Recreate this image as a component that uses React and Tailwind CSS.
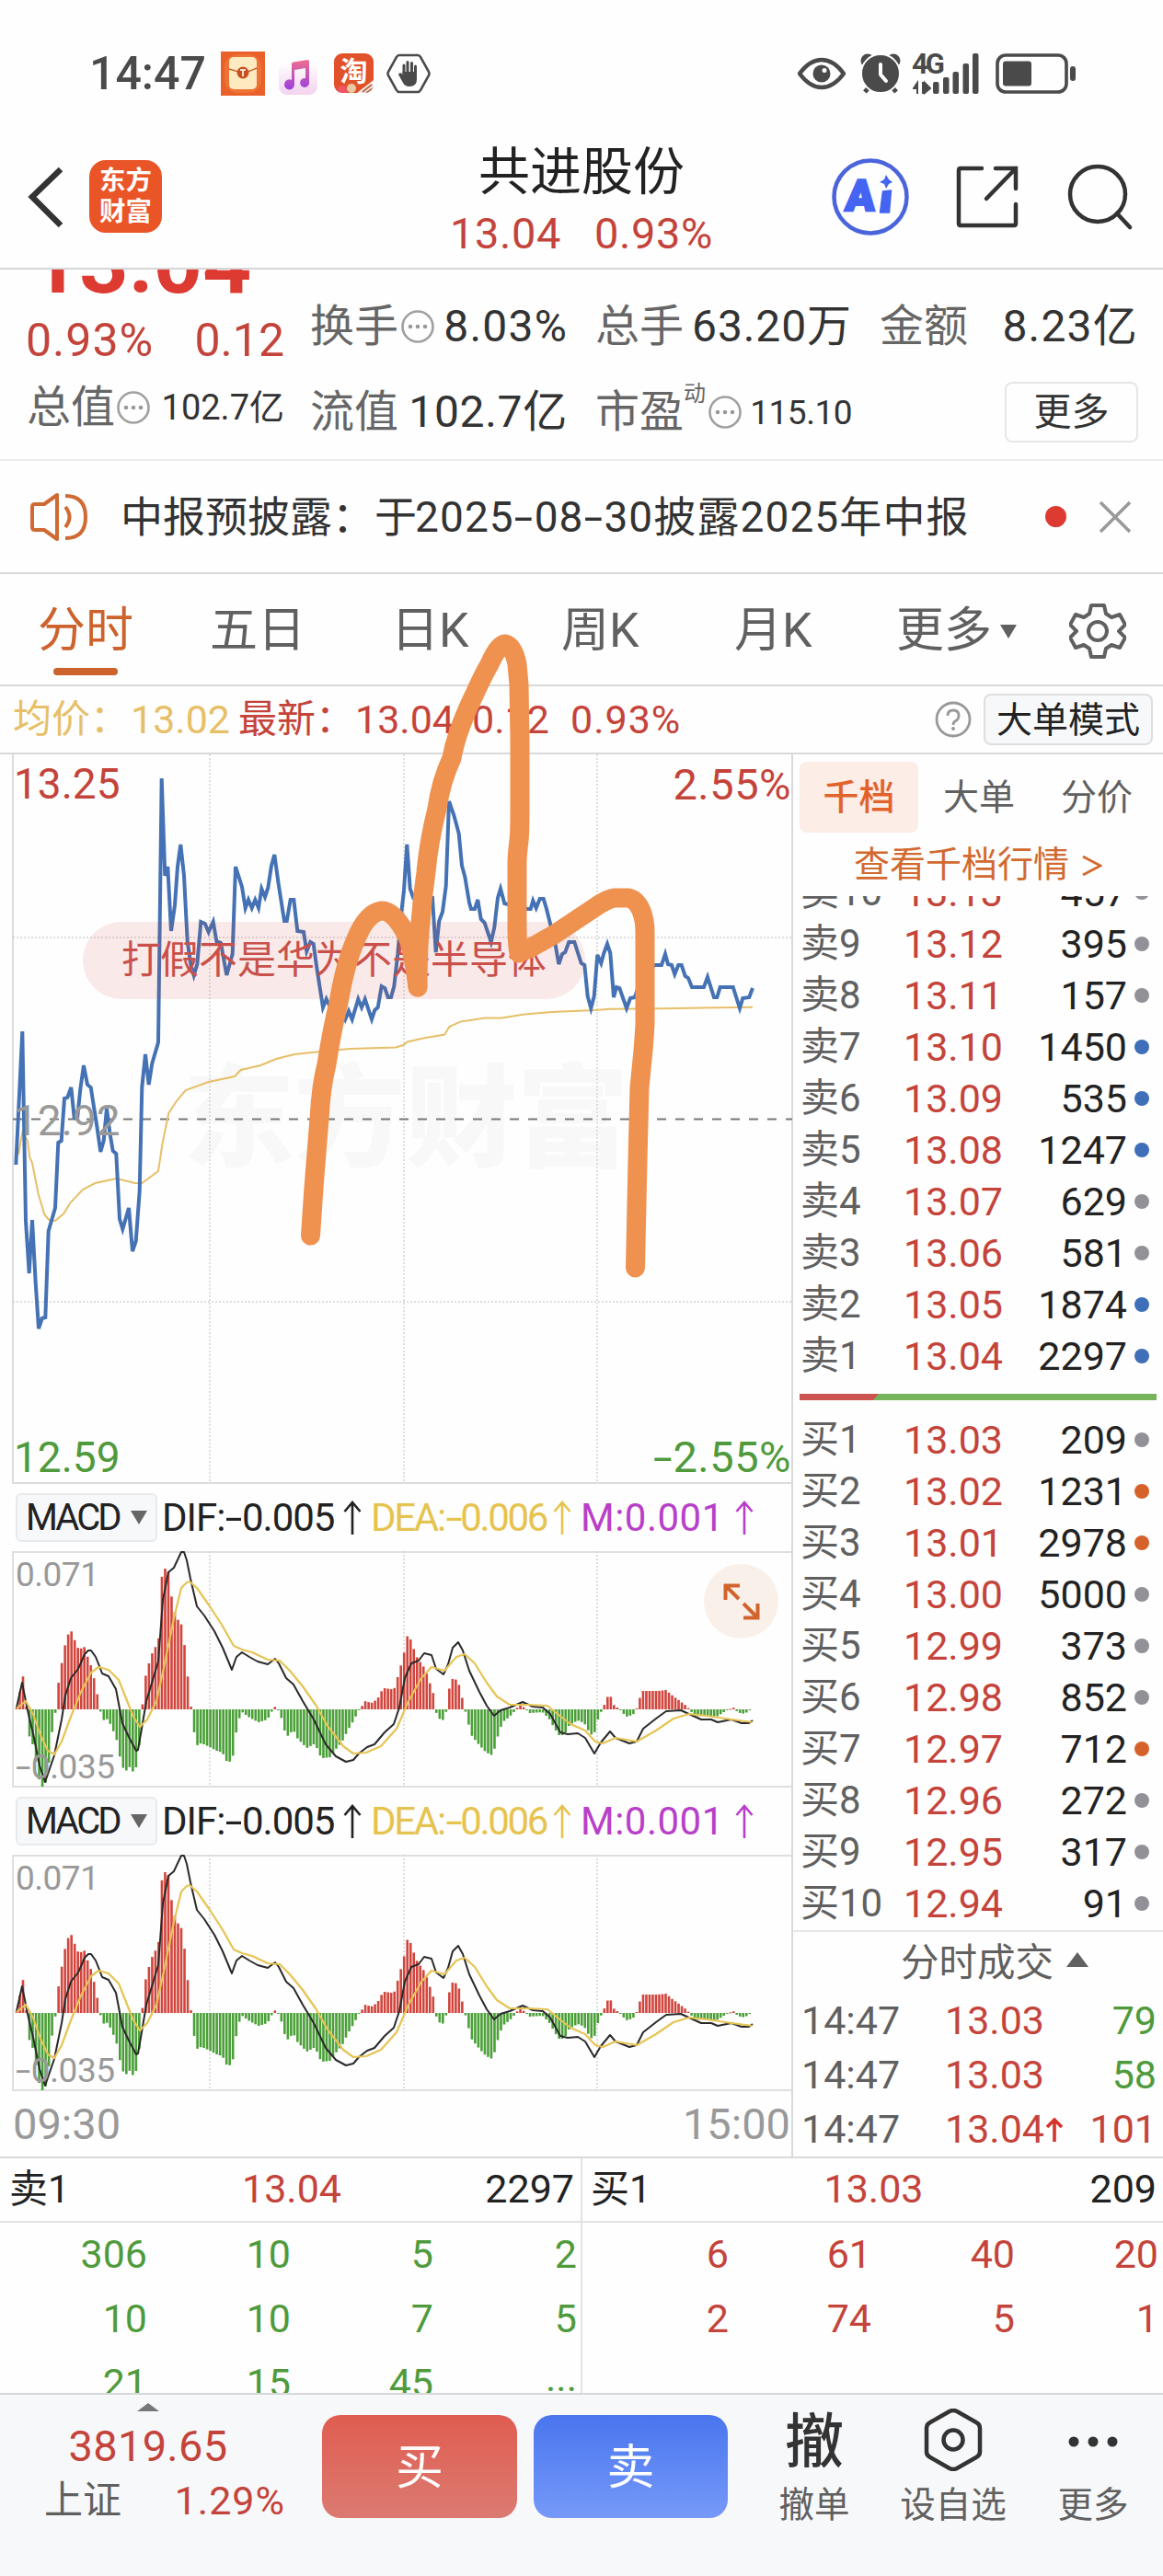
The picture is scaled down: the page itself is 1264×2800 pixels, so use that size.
import { useMemo } from 'react';

const asks = [
  { name: '卖10', price: '13.13', volume: '457', dot: 'bg-[#929197]' },
  { name: '卖9', price: '13.12', volume: '395', dot: 'bg-[#929197]' },
  { name: '卖8', price: '13.11', volume: '157', dot: 'bg-[#929197]' },
  { name: '卖7', price: '13.10', volume: '1450', dot: 'bg-[#3f6fb8]' },
  { name: '卖6', price: '13.09', volume: '535', dot: 'bg-[#3f6fb8]' },
  { name: '卖5', price: '13.08', volume: '1247', dot: 'bg-[#3f6fb8]' },
  { name: '卖4', price: '13.07', volume: '629', dot: 'bg-[#929197]' },
  { name: '卖3', price: '13.06', volume: '581', dot: 'bg-[#929197]' },
  { name: '卖2', price: '13.05', volume: '1874', dot: 'bg-[#3f6fb8]' },
  { name: '卖1', price: '13.04', volume: '2297', dot: 'bg-[#3f6fb8]' },
];

const bids = [
  { name: '买1', price: '13.03', volume: '209', dot: 'bg-[#929197]' },
  { name: '买2', price: '13.02', volume: '1231', dot: 'bg-[#d6622b]' },
  { name: '买3', price: '13.01', volume: '2978', dot: 'bg-[#d6622b]' },
  { name: '买4', price: '13.00', volume: '5000', dot: 'bg-[#929197]' },
  { name: '买5', price: '12.99', volume: '373', dot: 'bg-[#929197]' },
  { name: '买6', price: '12.98', volume: '852', dot: 'bg-[#929197]' },
  { name: '买7', price: '12.97', volume: '712', dot: 'bg-[#d6622b]' },
  { name: '买8', price: '12.96', volume: '272', dot: 'bg-[#929197]' },
  { name: '买9', price: '12.95', volume: '317', dot: 'bg-[#929197]' },
  { name: '买10', price: '12.94', volume: '91', dot: 'bg-[#929197]' },
];

const trades = [
  { time: '14:47', price: '13.03', volume: '79', color: 'text-[#4f9a3c]' },
  { time: '14:47', price: '13.03', volume: '58', color: 'text-[#4f9a3c]' },
  { time: '14:47', price: '13.04', volume: '101', color: 'text-[#c4433a]', up: true },
];

const askQueue = ['306', '10', '5', '2', '10', '10', '7', '5', '21', '15', '45', '...'];
const bidQueue = ['6', '61', '40', '20', '2', '74', '5', '1'];

const priceLine =
  '17.3,446 24.3,301 28,507 31.7,564 35,506 38.7,574 42,624 45.7,613 49.3,612 52.7,518 60,493 63.3,422 66.7,420 70,374 73.3,373 77.3,362 80.7,395 84,396 87.3,364 91,338 95,359 98.7,362 105.3,404 109.3,432 112.7,420 116,385 119.3,411 122.7,431 126.3,434 130,505 133.3,516 140,493 144,540 147.7,529 151.7,475 154.3,362 158,326 161.7,359 165.3,336 172,313 175.7,26 179.3,132 182.3,122 186,192 190,164 193,122 196.3,98 200,132 203.7,203 207.3,228 210.7,240 214.3,228 218.3,182 222.7,184 226.7,193 231.7,182 235.3,203 240,205 246.3,240 252.7,217 256,122 263,144 266.7,167 270,158 273.7,167 277.3,158 281,167 284.3,146 288,155 291.3,145 295,121 298.3,109 302.7,141 309,181 311.7,181 315.7,158 319.3,158 323.3,192 330,193 333.3,214 337.3,204 340.7,206 344,230 351,275 354.7,266 360,277 371,277 375.3,288 379,279 382.7,288 389.3,266 393,275 396.7,266 404,288 407.3,278 410.7,275 414.7,252 418.3,254 421.7,264 425,264 428.3,252 432.3,217 436.7,168 439,148 442.3,98 445.7,146 449.3,156 470,156 473.7,215 477.3,181 481,171 484.7,143 488,51 493.3,66 498.7,86 502,121 505.3,133 510,161 512,168 516,168 519.3,158 522.7,179 526.7,183 533.7,204 537.3,188 541,156 544,146 548.3,162 573.3,168 576.7,168 579.3,159 582.7,167 586.7,157 590.7,157 594,168 603.3,205 607.3,228 611,217 614.3,215 618.3,204 624.3,204 631.7,227 635.3,229 638.7,263 642.3,276 645.7,263 649.3,218 653.3,227 656.3,216 660,206 663.3,216 667,264 670,253 673.3,254 681,276 685,265 690,264 698,240 711.7,229 719,229 723,217 726,228 730,229 733.3,239 737.3,229 740.7,229 744.7,241 748,243 752,253 765,253 769,242 776,264 779.3,264 782.7,253 796.7,253 804,276 807.3,265 814.3,264 818,254';

const averageLine =
  '20,435 24.3,411 30,420 32.3,438 35,444 41.7,478 48.3,500 53.3,506 60,507 69.3,499 76.7,487 90,473 103.3,466 126.7,461 146.7,466 154.3,466 172,453 176.7,422 183.3,390 191.7,377 201.7,365 226.7,356 255,350 261.7,343 283.3,338 300,331 320,326 348.3,323 380,320 430,318.5 438.3,316 442.7,312.5 460,308.5 483.3,304.5 488.3,296 500,290.6 526.7,286.6 545,286.6 570,282.6 600,280 646.7,278 663.3,276.7 720,276.2 818,274.7';

const difLine =
  '18,170 24,143 30,173 37,203 43,233 49,251 59,222 67,183 71,157 77,138 85,128 92,112 96,108 99,108 104,115 108,125 111,133 118,136 126,150 133,187 140,202 148,217 150,216 154,193 159,163 166,140 172,120 177,53 183,23 189,18 197,1 200,1 203,10 207,30 214,60 222,70 233,87 242,105 252,129 257,115 263,110 271,115 280,120 291,123 299,117 303,122 311,138 319,145 329,163 341,183 354,210 365,223 376,229 384,227 390,220 399,213 407,210 418,197 428,188 434,170 440,138 447,122 455,119 461,111 469,113 474,128 482,134 487,123 492,105 498,99 503,108 510,130 521,153 529,168 537,179 544,173 554,170 568,164 579,169 590,170 598,177 609,197 617,199 628,198 636,203 646,220 653,208 663,196 669,203 684,209 692,207 699,193 713,182 724,174 740,173 751,178 762,183 773,183 780,186 795,183 806,187 814,187 818,184';

const deaLine =
  '18,171 28,163 36,177 44,200 52,217 59,221 67,207 77,180 88,153 99,132 107,126 118,129 129,140 137,160 145,180 152,191 160,183 170,163 178,127 189,73 197,40 203,34 206,33 214,40 228,60 241,80 254,103 263,107 274,110 291,118 304,119 315,130 329,147 343,167 356,190 373,212 384,220 398,219 414,212 431,193 444,163 458,138 469,126 483,130 496,115 505,112 516,122 529,143 540,158 554,167 573,167 595,168 606,177 620,188 636,195 647,207 655,209 669,203 692,207 713,195 732,182 749,177 768,179 795,183 818,186';

// outline of the MACD histogram: [x, height]
const histogram = [
  [18, 2], [20.8, 12], [24.1, 44], [28, 9], [31.3, -28], [35, -35], [38.4, -53], [42.2, -75], [45.5, -84], [48.8, -84],
  [52.7, -62], [56, -28], [59.8, -7], [63, 25], [66.4, 46], [70.2, 68], [73.5, 80], [76.8, 87], [80.6, 77], [83.9, 67],
  [87.8, 66], [91.6, 68], [94.9, 58], [98.2, 50], [102, 35], [105.3, 19], [108.6, 0], [111.9, -12], [115.7, -10], [119, -14],
  [122.9, -23], [126, -29], [130, -50], [133.3, -63], [137, -67], [140.4, -62], [143.7, -68], [147.5, -65], [150.8, -47],
  [154, -3], [158, 35], [161, 47], [165, 60], [168.4, 67], [172.2, 72], [175.5, 143], [179.3, 153], [182.6, 153], [186, 125],
  [189.8, 106], [193, 98], [196.9, 93], [200.2, 73], [204, 36], [207.3, 5], [210.6, -23], [214.4, -39], [217.7, -37],
  [221.6, -38], [228.2, -41], [235.3, -45], [241.9, -47], [245.7, -56], [249.5, -57], [252.8, -53], [256.7, -25], [260, -10],
  [263.3, -3], [269.8, -8], [277, -12], [281.4, -14], [290.7, -11], [295, -3], [298.4, 3], [302.2, 0], [305.5, -8],
  [308.8, -22], [312.6, -29], [315.9, -25], [319.7, -24], [323.6, -32], [333.5, -42], [341, -38], [344.4, -42], [347.7, -50],
  [351.6, -53], [358.7, -52], [365.3, -43], [371.9, -35], [378.4, -22], [385.6, -10], [389.4, -1], [393.2, 3], [396.5, 9],
  [403.7, 7], [410.2, 11], [414, 19], [417.9, 23], [425, 22], [428.3, 22], [431.6, 33], [435.5, 47], [438.8, 59], [442, 80],
  [445.9, 77], [449.2, 67], [453, 57], [456.3, 52], [459.6, 48], [463.4, 40], [466.7, 30], [470.6, 19], [473.9, -3],
  [477.2, -10], [481, -12], [484.3, -7], [487.6, 20], [491.4, 33], [494.7, 33], [498, 30], [501.8, 15], [505, 1], [509, -15],
  [512.3, -28], [519.4, -37], [526.5, -45], [533.6, -50], [536.9, -45], [540.2, -32], [544, -20], [547.4, -13], [553.9, -8],
  [559.4, -2], [564.4, 5], [571.5, 1], [575.9, -4], [589.6, -3], [596.7, -10], [600.6, -17], [607.1, -28], [613.2, -28],
  [618.7, -17], [628, -12], [635, -15], [641.7, -27], [645.5, -28], [649.4, -12], [652.7, -4], [656.5, 4], [659.8, 13],
  [663, 16], [666.9, 5], [673.5, 0], [680.6, -8], [687.8, -6], [691.6, 0], [694.9, 11], [698.2, 20], [707.5, 20], [715.7, 20],
  [724, 21], [729.5, 16], [737.7, 10], [747, 3], [750.3, -2], [759.6, -8], [765, -6], [778.8, -8], [789.8, -1], [797, 2],
  [800.8, -2], [806.2, -5], [812.8, -3], [817.8, 2],
];

const BAR_STEP = 3.51;

const StatusBar = () => (
  <div className="flex h-[133px] items-center pt-[26px] pl-[97px] text-[#4a4a4a]">
    <span className="w-[143px] text-[50px] font-medium leading-none">14:47</span>
    <svg width="48" height="48" viewBox="0 0 48 48">
      <rect width="48" height="48" fill="#e9602a" />
      <rect x="4" y="3" width="40" height="42" rx="14" fill="#ee7234" />
      <rect x="9" y="6" width="30" height="35" rx="5" fill="#fdeac0" />
      <path d="M9 19c8 2 11 4 15 4s8-2 15-5" fill="none" stroke="#c9602c" strokeWidth="1.5" />
      <circle cx="24" cy="23" r="6.5" fill="#c8511f" />
      <path d="M21 20h6M24 20v7" stroke="#fff" strokeWidth="1.6" />
    </svg>
    <svg className="ml-[14px] mt-2" width="44" height="38" viewBox="0 0 44 38">
      <defs>
        <linearGradient id="note" x1="0" y1="0" x2="0" y2="1">
          <stop offset="0" stopColor="#ee6f8f" />
          <stop offset="1" stopColor="#9c3fe0" />
        </linearGradient>
        <linearGradient id="noteBg" x1="0" y1="0" x2="0" y2="1">
          <stop offset="0" stopColor="#ffffff" />
          <stop offset="1" stopColor="#f3d3ee" />
        </linearGradient>
      </defs>
      <rect x="1" y="2" width="42" height="36" rx="9" fill="url(#noteBg)" />
      <path d="M15 4Q15 3 17 2.500L32 0q2 0 2 2v22a5 5 0 1 1-4-4V9l-12 2v16a5.500 5.500 0 1 1-3-5z" fill="url(#note)" />
    </svg>
    <div className="relative ml-[17px] flex h-[43px] w-[43px] items-start justify-center overflow-hidden rounded-[9px] bg-[#e2522a]">
      <span className="mt-[5px] text-[30px] font-bold leading-none text-white">淘</span>
      <svg className="absolute bottom-0 left-0" width="43" height="14" viewBox="0 0 43 14">
        <circle cx="9" cy="11" r="5" fill="#ef5468" />
        <circle cx="19" cy="9" r="5" fill="#e8c9a4" />
        <path d="M25 14 43 0v14z" fill="#f7efe9" />
        <path d="m31 13 10-8M35 14l7-5" stroke="#b86a50" strokeWidth="2" />
      </svg>
    </div>
    <svg className="ml-[14px]" width="48" height="44" viewBox="0 0 48 44">
      <path d="M14 2h20q2 0 3 2l9 16q1 2 0 4l-9 16q-1 2-3 2H14q-2 0-3-2L2 24q-1-2 0-4l9-16q1-2 3-2z" fill="none" stroke="#4a4a4a" strokeWidth="2.600" />
      <path d="M19 24V13M23 22V9.500M27.500 22V10.500M31.500 24V14" stroke="#4a4a4a" strokeWidth="3" strokeLinecap="round" />
      <path d="M17.500 20h15.500v8q0 8-8 8-5 0-7-4l-5-9q1-3 4-1l1 2z" fill="#4a4a4a" />
    </svg>
    <svg className="ml-[398px]" width="54" height="36" viewBox="0 0 54 36">
      <path d="M3 18Q14 3 27 3t24 15Q40 33 27 33T3 18z" fill="none" stroke="#4a4a4a" strokeWidth="4.500" strokeLinejoin="round" />
      <circle cx="27" cy="18" r="9.500" fill="#4a4a4a" />
      <circle cx="30" cy="14.500" r="2.500" fill="#fff" />
    </svg>
    <svg className="ml-[15px]" width="44" height="44" viewBox="0 0 44 44">
      <circle cx="8" cy="8" r="7.500" fill="#4a4a4a" />
      <circle cx="36" cy="8" r="7.500" fill="#4a4a4a" />
      <path d="m10 36-5 6M34 36l5 6" stroke="#4a4a4a" strokeWidth="5" />
      <circle cx="22" cy="22" r="21" fill="#4a4a4a" stroke="#fff" strokeWidth="2" />
      <path d="M22 12v11l6 7" fill="none" stroke="#fff" strokeWidth="4" strokeLinecap="round" />
    </svg>
    <div className="relative ml-[13px] h-[46px] w-[74px]">
      <span className="absolute -left-px top-px text-[31px] font-bold leading-[23px] tracking-[-3px]">4G</span>
      <svg className="absolute inset-0" width="74" height="46" viewBox="0 0 74 46">
        <path d="M5 45V33l-4 6h4M11 32v13M13 33l6 6-6 5z" fill="#4a4a4a" stroke="#4a4a4a" strokeWidth="2" />
        <rect x="22" y="32" width="6.500" height="13" rx="2" fill="#4a4a4a" />
        <rect x="33" y="27" width="6.500" height="18" rx="2" fill="#4a4a4a" />
        <rect x="43.500" y="21" width="6.500" height="24" rx="2" fill="#4a4a4a" />
        <rect x="54.500" y="12" width="6.500" height="33" rx="2" fill="#4a4a4a" />
        <rect x="65" y="1" width="6.500" height="44" rx="2" fill="#4a4a4a" />
      </svg>
    </div>
    <svg className="ml-[16px]" width="88" height="44" viewBox="0 0 88 44">
      <rect x="2" y="2" width="75" height="40" rx="9" fill="none" stroke="#4a4a4a" strokeWidth="3.600" />
      <rect x="8" y="8.500" width="31" height="27" rx="3" fill="#4a4a4a" />
      <rect x="81" y="14" width="6" height="16" rx="3" fill="#4a4a4a" />
    </svg>
  </div>
);

const Header = () => (
  <div className="grid h-[160px] grid-cols-[1fr_auto_1fr] items-center border-b-2 border-[#d6d6d6]">
    <div className="flex items-center pl-7 pt-[3px]">
      <svg width="44" height="70" viewBox="0 0 44 70">
        <path d="M38 5 7 35l31 31" fill="none" stroke="#333" strokeWidth="6.500" />
      </svg>
      <div className="ml-[25px] flex h-[79px] w-[79px] flex-col items-center justify-center rounded-[18px] bg-[#ea5528] text-[28.500px] font-bold leading-[34px] text-white">
        <span>东方</span>
        <span>财富</span>
      </div>
    </div>
    <div className="flex flex-col items-center pt-[16px]">
      <span className="text-[56px] leading-[67px] text-[#222]">共进股份</span>
      <span className="flex gap-[36px] text-[47px] leading-[65px] tracking-[0.600px] text-[#c4433a]">
        <span>13.04</span>
        <span>0.93%</span>
      </span>
    </div>
    <div className="flex items-center justify-end pr-[32px] pt-[3px]">
      <svg width="84" height="84" viewBox="0 0 84 84">
        <circle cx="42" cy="42" r="39.500" fill="none" stroke="#4a64dc" strokeWidth="4.500" />
        <text x="14" y="57" fill="#4465f2" stroke="#4465f2" strokeWidth="2.500" fontFamily="Roboto" fontSize="47" fontWeight="900" transform="skewX(-4) translate(4 0)">A</text>
        <path d="m55.500 36 9-1-2 24h-10z" fill="#4465f2" stroke="#4465f2" strokeWidth="1.500" strokeLinejoin="round" />
        <path d="m59 18 3 5 4 3-4 2-3 5-2-5-5-2 5-3z" fill="#4465f2" />
      </svg>
      <svg className="ml-[50px]" width="72" height="72" viewBox="0 0 72 72">
        <path d="M29 5H6q-2 0-2 2v58q0 2 2 2h58q2 0 2-2V44" fill="none" stroke="#333" strokeWidth="4.500" strokeLinecap="round" />
        <path d="M44 5h22v22M66 5 34 38" fill="none" stroke="#333" strokeWidth="4.500" strokeLinecap="round" />
      </svg>
      <svg className="ml-[50px]" width="72" height="72" viewBox="0 0 72 72">
        <circle cx="33" cy="33" r="30" fill="none" stroke="#333" strokeWidth="4.500" />
        <path d="m54 54 14 15" stroke="#333" strokeWidth="4.500" strokeLinecap="round" />
      </svg>
    </div>
  </div>
);

const MoreDots = () => (
  <svg className="shrink-0" width="36" height="36" viewBox="0 0 36 36">
    <circle cx="18" cy="18" r="16.500" fill="none" stroke="#a0a0a0" strokeWidth="2.600" />
    <circle cx="10" cy="18" r="2.300" fill="#999" />
    <circle cx="18" cy="18" r="2.300" fill="#999" />
    <circle cx="26" cy="18" r="2.300" fill="#999" />
  </svg>
);

// minus sign as wide as the one of the DIN digits
const Dash = () => <span className="mx-[4px] inline-block scale-x-160">-</span>;

const Quote = () => (
  <div className="flex h-[208px] border-b-2 border-[#ededed] pl-[29px] text-[48px] leading-none text-[#333]">
    <div className="w-[280px]">
      <div className="h-[30px] overflow-hidden">
        <div className="-mt-[36px] pl-[4px] text-[93px] font-bold leading-[60px] text-[#dd3a32]">13.04</div>
      </div>
      <div className="flex h-[93px] items-center justify-between text-[50px] text-[#c4433a]">
        <span className="-ml-px tracking-[1px]">0.93%</span>
        <span>0.12</span>
      </div>
      <div className="flex h-[54px] items-center justify-between">
        <span className="flex items-center gap-[2px] text-[#666]">总值<MoreDots /></span>
        <span className="text-[38px]">102.7亿</span>
      </div>
    </div>
    <div className="ml-[28px] w-[900px] pt-[2px]">
      <div className="grid h-[120px] grid-cols-[280px_279px_1fr] items-center gap-x-[30px]">
        <div className="flex items-center justify-between">
          <span className="flex items-center gap-[3px] text-[#666]">换手<MoreDots /></span>
          <span className="tracking-[1.200px]">8.03%</span>
        </div>
        <div className="flex items-center justify-between">
          <span className="text-[#666]">总手</span>
          <span className="tracking-[0.900px]">63.20万</span>
        </div>
        <div className="flex items-center justify-between">
          <span className="text-[#666]">金额</span>
          <span className="tracking-[1.200px]">8.23亿</span>
        </div>
      </div>
      <div className="grid h-[52px] grid-cols-[280px_279px_1fr] items-center gap-x-[30px]">
        <div className="flex items-center justify-between">
          <span className="text-[#666]">流值</span>
          <span className="tracking-[0.700px]">102.7亿</span>
        </div>
        <div className="flex items-center justify-between">
          <span className="flex items-center text-[#666]">
            市盈<span className="-mt-10 mr-[3px] text-[24px]">动</span><MoreDots />
          </span>
          <span className="text-[37px] tracking-[-0.500px]">115.10</span>
        </div>
        <div className="flex justify-end">
          <button className="h-[66px] w-[145px] rounded-lg border-2 border-[#e6e6e6] text-[41px]">更多</button>
        </div>
      </div>
    </div>
  </div>
);

const Notice = () => (
  <div className="flex h-[123px] items-center border-b-2 border-[#d9d9d9] pl-[33px]">
    <svg width="64" height="54" viewBox="0 0 64 54">
      <path d="M29 3v48L15 41H5q-3 0-3-3V16q0-3 3-3h10z" fill="none" stroke="#cf6a33" strokeWidth="4" strokeLinejoin="round" />
      <path d="M38 16q9 11 0 22M38 4q22 0 22 23T38 50" fill="none" stroke="#cf6a33" strokeWidth="4" />
    </svg>
    <span className="ml-[34px] w-[1005px] whitespace-nowrap text-[46px] leading-none text-[#333]">
      中报预披露：于
      <span className="-ml-[2px] tracking-[1.100px]">
        2025<Dash />08<Dash />30披露2025年中报
      </span>
    </span>
    <span className="h-[23px] w-[23px] rounded-full bg-[#dd3a32]" />
    <svg className="ml-[35px]" width="36" height="36" viewBox="0 0 36 36">
      <path d="m2 2 32 32M34 2 2 34" stroke="#999" strokeWidth="3.500" />
    </svg>
  </div>
);

const Tabs = () => (
  <div className="flex h-[122px] items-center border-b-2 border-[#d9d9d9] pl-[41px] pt-[4px] text-[52px] leading-none text-[#606060]">
    <span className="relative w-[187px] text-[#cd622c]">
      分时
      <i className="absolute -bottom-[22px] left-[17px] h-[8px] w-[70px] rounded-full bg-[#cd622c]" />
    </span>
    <span className="w-[197px]">五日</span>
    <span className="w-[185px]">日K</span>
    <span className="w-[188px]">周K</span>
    <span className="w-[176px]">月K</span>
    <span>更多</span>
    <svg className="ml-[9px]" width="18" height="15" viewBox="0 0 18 15">
      <path d="M0 0h18L9 15z" fill="#606060" />
    </svg>
    <svg className="ml-[57px]" width="62" height="62" viewBox="0 0 62 62">
      <path
        d="M24 3h14l2 9 6 4 9-3 6 11-7 7 7 7-6 11-9-3-6 4-2 9H24l-2-9-6-4-9 3L1 38l7-7-7-7 6-11 9 3 6-4z"
        fill="none"
        stroke="#606060"
        strokeWidth="4"
        strokeLinejoin="round"
      />
      <circle cx="31" cy="31" r="10" fill="none" stroke="#606060" strokeWidth="4" />
    </svg>
  </div>
);

const PriceInfo = () => (
  <div className="flex h-[74px] items-center border-b-2 border-[#d9d9d9] pl-[14px] text-[42px] leading-none text-[#c4433a]">
    <span className="w-[128px] text-[#e6bf68]">均价：</span>
    <span className="w-[117px] text-[43px] text-[#e6bf68]">13.02</span>
    <span className="w-[127px]">最新：</span>
    <span className="w-[127px] text-[43px]">13.04</span>
    <span className="w-[107px] text-[43px]">0.12</span>
    <span className="w-[396px] text-[43px] tracking-[1px]">0.93%</span>
    <svg width="40" height="40" viewBox="0 0 40 40">
      <circle cx="20" cy="20" r="18" fill="none" stroke="#999" strokeWidth="2.800" />
      <path d="M14 16q0-6 6-6t6 6q0 4-4 6-2 1-2 4" fill="none" stroke="#999" strokeWidth="2.800" />
      <circle cx="20" cy="30" r="2" fill="#999" />
    </svg>
    <button className="ml-[13px] h-[56px] w-[184px] rounded-lg border-2 border-[#dcdee0] bg-[#f7f8fa] pt-[2px] text-[39px] text-[#222]">
      大单模式
    </button>
  </div>
);

const Grid = ({ height }) => (
  <g stroke="#d4d4d4" strokeWidth="1.500" strokeDasharray="2 2">
    <path d={`M228 0V${height}`} />
    <path d={`M439 0V${height}`} />
    <path d={`M649 0V${height}`} />
  </g>
);

const PriceChart = () => (
  <div className="relative ml-[13px] h-[793px] border-b-2 border-l-2 border-[#dcdcdc] text-[46px] leading-none">
    <span className="absolute left-[184px] top-[337px] text-[121px] font-black text-[#f8f8f8]">东方财富</span>
    <svg className="absolute -left-[15px] top-0" width="861" height="791" viewBox="0 0 861 791">
      <Grid height={791} />
      <g stroke="#d4d4d4" strokeWidth="1.500" strokeDasharray="2 2">
        <path d="M14 199H861" />
        <path d="M14 595H861" />
      </g>
      <path d="M14 396.500H861" stroke="#777" strokeWidth="2" strokeDasharray="10 10" />
      <polyline points={averageLine} fill="none" stroke="#e6bf68" strokeWidth="2" />
      <polyline points={priceLine} fill="none" stroke="#4472b4" strokeWidth="4" />
    </svg>
    <span className="absolute left-0 top-[9px] text-[#c4433a]">13.25</span>
    <span className="absolute right-0 top-[9px] text-[47px] tracking-[0.500px] text-[#c4433a]">2.55%</span>
    <span className="absolute left-0 top-[375px] text-[#999]">12.92</span>
    <span className="absolute bottom-[4px] left-0 text-[#4f9a3c]">12.59</span>
    <span className="absolute bottom-[4px] right-0 text-[47px] tracking-[0.500px] text-[#4f9a3c]"><Dash />2.55%</span>
    <span className="absolute left-[75px] top-[182px] flex h-[84px] w-[546px] items-center whitespace-nowrap rounded-full bg-[#d03c32]/10 pl-[42px] text-[42px] text-[#c9504b]">
      打假不是华为不是半导体
    </span>
    {/* hand drawn mark */}
    <svg className="pointer-events-none absolute -left-[15px] top-0 z-10 overflow-visible" width="861" height="791" viewBox="0 0 861 791">
      <g fill="none" stroke="#ef914f" strokeWidth="21" strokeLinecap="round" strokeLinejoin="round">
        <path d="M337.500 523 341 471 347 396Q349 360 355 337 361 298 368 270 375 228 386 203 398 172 415 170 430 170 445 203 450 222 454 253" />
        <path d="M454 253Q454 210 457 183 459 155 463 128 466 95 475 59 479 30 491 4 496-25 516-66 525-86 532-98 542-120 549-120 558-118 562-98L564-76 565-16 565 60Q565 85 564 94 562 110 562 118V188Q562 205 564 216 570 213 577 210L602 196 647 166Q660 157 668 156H683Q692 158 697 170 701 180 701 193L701 293Q700 310 699 322L695 362 693 442 690.500 558" />
      </g>
    </svg>
  </div>
);

const IndicatorBar = () => (
  <div className="flex h-[73px] items-center pl-[17px] text-[42px] leading-none">
    <button className="flex h-[53px] w-[154px] items-center justify-between rounded-md border-2 border-[#e8eaec] bg-[#f7f8fa] pl-[9px] pr-[9px] text-[40px] tracking-[-3px] text-[#222]">
      MACD
      <svg width="18" height="15" viewBox="0 0 18 15">
        <path d="M0 0h18L9 15z" fill="#666" />
      </svg>
    </button>
    <span className="ml-[5px] flex w-[227px] items-center text-[#222]">
      <span className="w-[197px] tracking-[-1px]">DIF:<Dash />0.005</span>
      <UpArrow />
    </span>
    <span className="flex w-[228px] items-center text-[#e6c34f]">
      <span className="w-[198px] tracking-[-2.300px]">DEA:<Dash />0.006</span>
      <UpArrow />
    </span>
    <span className="flex items-center text-[#b83fc8]">
      <span className="w-[168px] tracking-[0.500px]">M:0.001</span>
      <UpArrow />
    </span>
  </div>
);

const UpArrow = () => (
  <svg width="20" height="38" viewBox="0 0 20 38">
    <path d="M10 37V2M1.500 12 10 2l8.500 10" fill="none" stroke="currentColor" strokeWidth="2.600" />
  </svg>
);

const MacdChart = ({ expandable }) => {
  const bars = useMemo(() => {
    const result = [];
    for (let x = 18; x <= 818; x += BAR_STEP) {
      const next = histogram.findIndex((point) => point[0] >= x);
      if (next < 1) {
        result.push({ x, height: histogram[0][1] });
        continue;
      }
      const [x0, h0] = histogram[next - 1];
      const [x1, h1] = histogram[next];
      result.push({ x, height: h0 + ((h1 - h0) * (x - x0)) / (x1 - x0) });
    }
    return result;
  }, []);

  return (
    <div className="relative ml-[13px] h-[257px] border-2 border-r-0 border-[#dfdfdf] text-[37px] leading-none text-[#999]">
      <svg className="absolute -left-[15px] -top-[2px]" width="861" height="257" viewBox="0 0 861 257">
        <Grid height={256} />
        {bars.map((bar) => (
          <rect
            key={bar.x}
            x={bar.x - 1.3}
            y={bar.height > 0 ? 172 - bar.height : 172}
            width="2.600"
            height={Math.max(Math.abs(bar.height), 1)}
            fill={bar.height > 0 ? '#d1453d' : '#4b9f38'}
          />
        ))}
        <polyline points={difLine} fill="none" stroke="#2a2a2a" strokeWidth="2" strokeLinejoin="round" />
        <polyline points={deaLine} fill="none" stroke="#e6c454" strokeWidth="2.200" strokeLinejoin="round" />
      </svg>
      <span className="absolute left-[2px] top-[5px] tracking-[-0.500px]">0.071</span>
      <span className="absolute bottom-[2px] left-[1px] tracking-[-0.400px]"><Dash />0.035</span>
      {expandable && (
        <span className="absolute right-[14px] top-[12px] flex h-[81px] w-[81px] items-center justify-center rounded-full bg-[#faf0ea]">
          <svg width="42" height="42" viewBox="0 0 42 42">
            <path d="M19 3.500H3.500V19M4 4l14 14M23 38.500h15.500V23M38 38 23 23" fill="none" stroke="#d2632c" strokeWidth="4" />
          </svg>
        </span>
      )}
    </div>
  );
};

const LevelRow = ({ level }) => (
  <div className="flex h-14 shrink-0 items-center pl-[8px] text-[43px] leading-none">
    <span className="w-[112px] whitespace-nowrap text-[42px] text-[#606060]">{level.name}</span>
    <span className="w-[110px] text-[#c4433a]">{level.price}</span>
    <span className="w-[133px] text-right text-[#222]">{level.volume}</span>
    <span className={`ml-[8px] h-4 w-4 rounded-full ${level.dot}`} />
  </div>
);

const OrderBook = () => (
  <div className="flex w-[404px] flex-col border-l-2 border-[#d9d9d9] leading-none">
    <div className="flex h-[92px] items-center pl-[7px] pt-[2px] text-[39px] text-[#606060]">
      <span className="-mt-[2px] flex h-[77px] w-[129px] items-center justify-center rounded-lg bg-[#fcede6] pt-[2px] font-medium text-[#e2622c]">千档</span>
      <span className="ml-[27px]">大单</span>
      <span className="ml-[50px]">分价</span>
    </div>
    <div className="flex h-[54px] items-center gap-[14px] pl-[66px] pt-[3px] text-[39px] text-[#d2692f]">
      <span>查看千档行情</span>
      <svg width="22" height="22" viewBox="0 0 22 22">
        <path d="m1 1 19 10L1 21" fill="none" stroke="#d2692f" strokeWidth="2.800" />
      </svg>
    </div>
    <div className="mt-2 flex h-[528px] flex-col justify-end overflow-hidden">
      {asks.map((level) => (
        <LevelRow key={level.name} level={level} />
      ))}
    </div>
    <svg className="ml-[7px] mt-[13px] shrink-0" width="388" height="7" viewBox="0 0 388 7">
      <rect width="388" height="7" fill="#76b45c" />
      <path d="M0 0h86l-6 7H0z" fill="#cc5450" />
    </svg>
    <div className="mt-[15px]">
      {bids.map((level) => (
        <LevelRow key={level.name} level={level} />
      ))}
    </div>
    <div className="mt-[1px] flex h-[69px] items-center border-t-2 border-[#e6e6e6] pl-[117px] text-[41.500px] text-[#606060]">
      分时成交
      <svg className="-mt-2 ml-[14px]" width="24" height="16" viewBox="0 0 24 16">
        <path d="M0 16h24L12 0z" fill="#606060" />
      </svg>
    </div>
    {trades.map((trade, index) => (
      <div key={index} className="flex h-[59px] items-center pl-[9px] pr-[7px] text-[43px]">
        <span className="w-[156px] text-[#606060]">{trade.time}</span>
        <span className="w-[109px] text-[#c4433a]">{trade.price}</span>
        {trade.up && (
          <svg width="20" height="27" viewBox="0 0 20 27">
            <path d="M10 27V3M2 11l8-8 8 8" fill="none" stroke="#d3342b" strokeWidth="3.600" />
          </svg>
        )}
        <span className={`ml-auto ${trade.color}`}>{trade.volume}</span>
      </div>
    ))}
  </div>
);

const Depth = () => (
  <div className="flex h-[257px] border-t-2 border-[#d9d9d9] text-[43px] leading-none">
    <div className="w-[633px] border-r-2 border-[#e2e2e2]">
      <div className="grid h-[70px] grid-cols-3 items-center border-b-2 border-[#e2e2e2] pb-[1px] pl-[10px] pr-[7px] text-[#222]">
        <span className="text-[42px]">卖1</span>
        <span className="text-center text-[#c4433a]">13.04</span>
        <span className="text-right">2297</span>
      </div>
      <div className="-mt-[1px] grid h-[186px] grid-cols-[160px_156px_155px_156px] auto-rows-[70px] items-center overflow-hidden text-right text-[#4f9a3c]">
        {askQueue.map((item, index) => (
          <span key={index} className={item === '...' ? '-mt-3' : ''}>{item}</span>
        ))}
      </div>
    </div>
    <div className="flex-1">
      <div className="grid h-[70px] grid-cols-3 items-center border-b-2 border-[#e2e2e2] pb-[1px] pl-[9px] pr-[7px] text-[#222]">
        <span className="text-[42px]">买1</span>
        <span className="text-center text-[#c4433a]">13.03</span>
        <span className="text-right">209</span>
      </div>
      <div className="-mt-[1px] grid h-[186px] grid-cols-[159px_155px_156px_156px] auto-rows-[70px] items-center overflow-hidden text-right text-[#c4433a]">
        {bidQueue.map((item, index) => (
          <span key={index}>{item}</span>
        ))}
      </div>
    </div>
  </div>
);

const BottomBar = () => (
  <div className="flex h-[199px] border-t-2 border-[#d6d7d9] bg-[#f7f8fa] leading-none">
    <div className="flex w-[322px] flex-col items-center pt-[9px]">
      <svg width="24" height="9" viewBox="0 0 24 9">
        <path d="M0 9h24L12 0z" fill="#77777b" />
      </svg>
      <span className="mt-[11px] text-[47px] leading-[54px] tracking-[0.300px] text-[#c4433a]">3819.65</span>
      <span className="flex w-[322px] items-center justify-between pl-[48px] pr-[12px] text-[42px] leading-[64px] text-[#606060]">
        上证
        <span className="text-[43px] tracking-[1px] text-[#c4433a]">1.29%</span>
      </span>
    </div>
    <button className="ml-[28px] mt-[22px] h-[112px] w-[212px] rounded-[20px] bg-linear-to-b from-[#e05c50] to-[#db7a71] pt-1 text-[52px] text-white">买</button>
    <button className="ml-[18px] mt-[22px] h-[112px] w-[211px] rounded-[20px] bg-linear-to-b from-[#4975ee] to-[#7699f9] pt-1 text-[52px] text-white">卖</button>
    <div className="ml-[44px] flex w-[100px] flex-col items-center text-[38.500px] text-[#606060]">
      <span className="mt-[18px] text-[64px] font-medium leading-[68px] text-[#333]">撤</span>
      <span className="mt-[15px] whitespace-nowrap">撤单</span>
    </div>
    <div className="ml-[36px] flex w-[130px] flex-col items-center text-[38.500px] text-[#606060]">
      <svg className="mt-[15px]" width="64" height="68" viewBox="0 0 64 68">
        <path d="M28 3q4-2 8 0l21 12q4 2 4 6v26q0 4-4 6L36 65q-4 2-8 0L7 53q-4-2-4-6V21q0-4 4-6z" fill="none" stroke="#333" strokeWidth="4.500" />
        <circle cx="32" cy="34" r="10.500" fill="none" stroke="#333" strokeWidth="4.500" />
      </svg>
      <span className="mt-[18px] whitespace-nowrap">设自选</span>
    </div>
    <div className="ml-[37px] flex w-[100px] flex-col items-center text-[38.500px] text-[#606060]">
      <svg className="mt-[45px]" width="54" height="12" viewBox="0 0 54 12">
        <circle cx="6" cy="6" r="5.500" fill="#333" />
        <circle cx="27" cy="6" r="5.500" fill="#333" />
        <circle cx="48" cy="6" r="5.500" fill="#333" />
      </svg>
      <span className="mt-[44px]">更多</span>
    </div>
  </div>
);

const App = () => {
  return (
    <div className="w-[1264px] overflow-hidden bg-[#fefefe] font-[family-name:Roboto,'Noto_Sans_CJK_SC',sans-serif]">
      <StatusBar />
      <Header />
      <Quote />
      <Notice />
      <Tabs />
      <PriceInfo />
      <div className="flex h-[1524px]">
        <div className="w-[860px]">
          <PriceChart />
          <IndicatorBar />
          <MacdChart expandable />
          <IndicatorBar />
          <MacdChart />
          <div className="flex h-[71px] items-center justify-between pl-[14px] pr-[1px] text-[47px] leading-none text-[#999]">
            <span>09:30</span>
            <span>15:00</span>
          </div>
        </div>
        <OrderBook />
      </div>
      <Depth />
      <BottomBar />
    </div>
  );
};

export default App;
